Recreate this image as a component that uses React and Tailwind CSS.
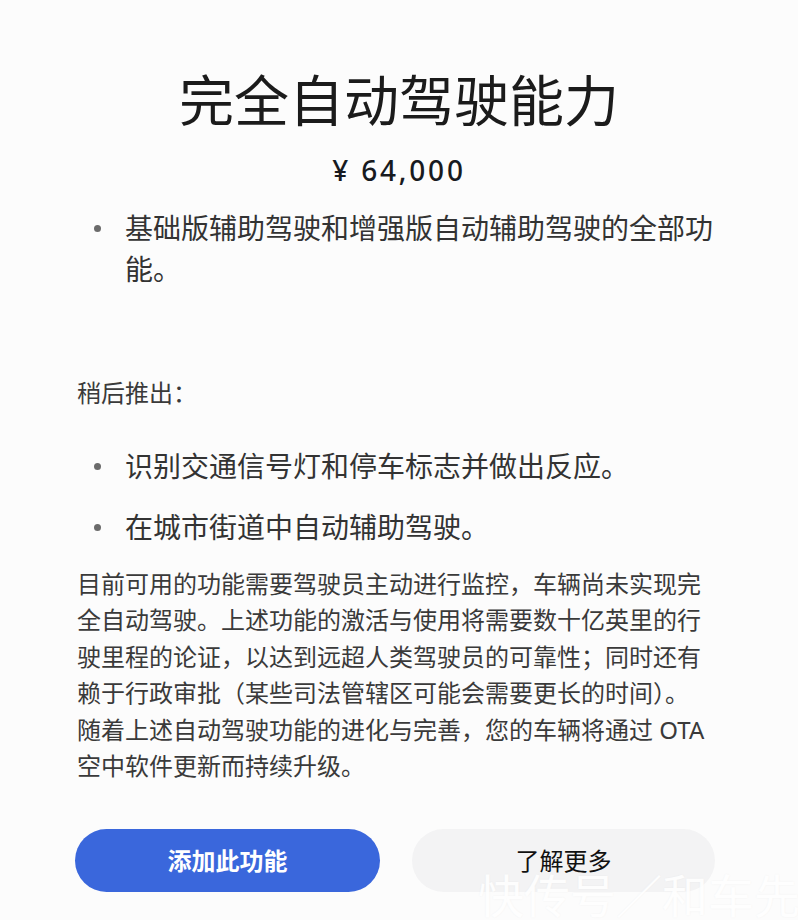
import React from 'react';

const cjk = { fontFamily: '"Noto Sans", "Noto Sans CJK SC", sans-serif' };

const laterItems = ['识别交通信号灯和停车标志并做出反应。', '在城市街道中自动辅助驾驶。'];

const noteLines = [
  '目前可用的功能需要驾驶员主动进行监控，车辆尚未实现完',
  '全自动驾驶。上述功能的激活与使用将需要数十亿英里的行',
  '驶里程的论证，以达到远超人类驾驶员的可靠性；同时还有',
  '赖于行政审批（某些司法管辖区可能会需要更长的时间）。',
  '随着上述自动驾驶功能的进化与完善，您的车辆将通过 OTA',
  '空中软件更新而持续升级。',
];

function Bullet({ children }) {
  return (
    <li className="flex items-start">
      <span className="ml-[17px] mt-[17px] w-[7px] h-[7px] rounded-full bg-[#6b6b6b] shrink-0"></span>
      <span className="ml-[24px] w-[600px] text-[28px] leading-[41px] text-[#333]">{children}</span>
    </li>
  );
}

export default function App() {
  return (
    <div className="relative min-h-[920px] w-full overflow-hidden bg-[#fcfcfc]" style={cjk}>
      <div className="px-[77px] pt-[72px] flex flex-col">
        <h1 className="text-center text-[55px] leading-[55px] font-normal text-[#1b1b1b]">完全自动驾驶能力</h1>

        <p className="mt-[29px] text-center text-[28px] leading-[28px] font-medium tracking-[0.1em] text-[#171a20]">
          ¥ 64,000
        </p>

        <ul className="mt-[24px]">
          <Bullet>基础版辅助驾驶和增强版自动辅助驾驶的全部功能。</Bullet>
        </ul>

        <p className="mt-[85px] text-[24px] leading-[36px] text-[#3a3a3a]">稍后推出：</p>

        <ul className="mt-[35px] flex flex-col gap-[20px]">
          {laterItems.map((t) => (
            <Bullet key={t}>{t}</Bullet>
          ))}
        </ul>

        <p className="mt-[18px] text-[24px] leading-[36.4px] text-[#3a3a3a] whitespace-nowrap">
          {noteLines.map((l) => (
            <span key={l} className="block">{l}</span>
          ))}
        </p>

        <div className="mt-[45px] flex gap-[32px]">
          <button className="-ml-[2px] w-[305px] h-[63px] rounded-full bg-[#3a67dc] text-white text-[24px] font-bold">
            添加此功能
          </button>
          <button className="w-[303px] h-[63px] rounded-full bg-[#f3f3f4] text-[#111] text-[24px]">
            了解更多
          </button>
        </div>
      </div>

      {/* watermark */}
      <div className="absolute left-[478px] top-[872px] whitespace-nowrap text-[46px] leading-[46px] text-white/90 [text-shadow:0_0_2px_rgba(0,0,0,0.05)]">
        快传号／和车先生
      </div>
    </div>
  );
}
